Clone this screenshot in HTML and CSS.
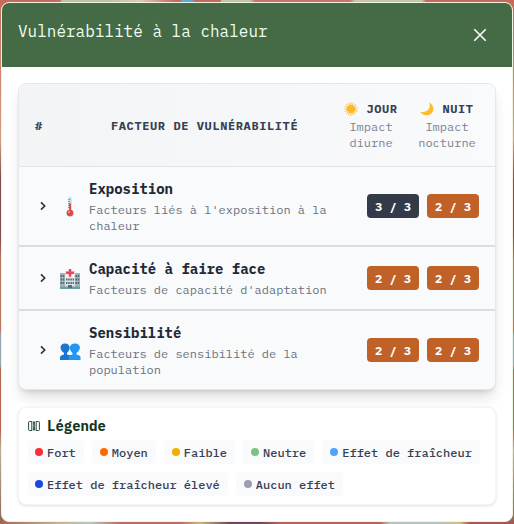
FILE: index.html
```html
<!DOCTYPE html>
<html lang="fr">
<head>
<meta charset="utf-8">
<title>Vulnérabilité à la chaleur</title>
<link rel="stylesheet" href="styles.css">
</head>
<body>
<div class="modal">
  <header class="modal-header">
    <h1>Vulnérabilité à la chaleur</h1>
    <svg class="close" viewBox="0 0 14 14"><path d="M1.3 1.3 12.7 12.7M12.7 1.3 1.3 12.7"/></svg>
  </header>
  <main class="modal-body">
    <section class="table">
      <div class="table-head">
        <div>#</div>
        <div class="factor">Facteur de vulnérabilité</div>
        <div class="period">
          <div class="period-name"><svg class="sky" viewBox="0 0 14 14"><path d="M7 .3V13.700M.3 7H13.700M2.200 2.200 11.800 11.800M11.800 2.200 2.200 11.800M4.400 .8 9.600 13.200M9.600 .8 4.400 13.200M.8 4.400 13.200 9.600M.8 9.600 13.200 4.400" stroke="#fdb52a" stroke-width=".9"/><circle cx="7" cy="7" r="4" fill="#fcb827"/></svg>Jour</div>
          <div class="impact">Impact<br>diurne</div>
        </div>
        <div class="period">
          <div class="period-name"><svg class="sky" viewBox="0 0 14 14"><path fill="#fbbd2c" d="M9.3 .4C16 4 14 12.8 7.300 13.300 4 13.500 1.300 12 .3 9.800 6 11.500 11.500 7 9.300 .4Z"/></svg>Nuit</div>
          <div class="impact">Impact<br>nocturne</div>
        </div>
      </div>
      <div class="row">
        <svg class="chevron" viewBox="0 0 6 10"><path d="M1 1.300 4.700 5 1 8.700"/></svg>
        <svg class="icon" viewBox="0 0 22 22"><path d="M9.200 2.500a1.800 1.800 0 0 1 3.600 0V14a3.800 3.800 0 1 1-3.600 0Z" fill="#c9e2e9"/><path d="M10.200 7.500h1.800v7h-1.800z" fill="#e5483f"/><circle cx="11" cy="17" r="3.300" fill="#e5483f"/><path d="M9.200 3.500h2M9.200 5.500h2M9.200 7.500h2M9.200 9.500h2M9.200 11.500h2" stroke="#546e7a" stroke-width=".7"/><circle cx="10" cy="16" r="1" fill="#ff9c90"/></svg>
        <div class="text"><h2>Exposition</h2><p>Facteurs liés à l'exposition à la chaleur</p></div>
        <span class="badge dark">3 / 3</span><span class="badge">2 / 3</span>
      </div>
      <div class="row">
        <svg class="chevron" viewBox="0 0 6 10"><path d="M1 1.300 4.700 5 1 8.700"/></svg>
        <svg class="icon" viewBox="0 0 22 22"><path fill="#a3b5bb" d="M1 5h20v15H1z"/><path fill="#dde3e6" d="M6 3h10v17H6z"/><path fill="#6f9ea6" d="M1 18.500h20V21H1z"/><path d="M1.500 8h4M1.500 11.500h4M1.500 15h4M16.500 8h4M16.500 11.500h4M16.500 15h4M7 11.500h8M7 15h8" stroke="#4f6b74" stroke-width="2" stroke-dasharray="1.500 .7"/><path fill="#546e7a" d="M9 17h4v3H9z"/><path fill="#f3f5f6" d="M7 2h8v7.500H7z"/><path fill="#f44359" d="M9.700 1h2.600v2.500H15v2.600h-2.700v2.600H9.700V6.100H7V3.500h2.700z"/></svg>
        <div class="text"><h2>Capacité à faire face</h2><p>Facteurs de capacité d'adaptation</p></div>
        <span class="badge">2 / 3</span><span class="badge">2 / 3</span>
      </div>
      <div class="row">
        <svg class="chevron" viewBox="0 0 6 10"><path d="M1 1.300 4.700 5 1 8.700"/></svg>
        <svg class="icon" viewBox="0 0 22 22"><path fill="#1976d2" d="M1 20v-2.500C1 15.500 3 15 5 14.500V13C-.5 9 1 3.500 6 3.500s6.500 5.500 2 9.500v1.500c3 .5 5 1 5 3V20Z"/><path fill="#2196f3" d="M9.500 20v-2.500c0-2 2-2.500 4-3V13c-4.500-4-3-9.500 2.500-9.500s7 5.500 1.500 9.500v1.500c2 .5 4 1 4 3V20Z"/></svg>
        <div class="text"><h2>Sensibilité</h2><p>Facteurs de sensibilité de la population</p></div>
        <span class="badge">2 / 3</span><span class="badge">2 / 3</span>
      </div>
    </section>
    <section class="legend">
      <h3><svg class="legend-icon" viewBox="0 0 12 12"><path d="M1.500 1.500H3.800V10.500H1.500Q.6 10.500 .6 9.600V2.400Q.6 1.500 1.500 1.500ZM5.300 1.500Q7 5 5.300 10.500M6.500 1.500Q5.200 6 6.800 10.500M8.200 1.500H10.500Q11.400 1.500 11.400 2.400V9.600Q11.400 10.500 10.500 10.500H8.200Z"/></svg>Légende</h3>
      <div class="chips">
        <span class="chip"><i class="dot strong"></i>Fort</span>
        <span class="chip"><i class="dot medium"></i>Moyen</span>
        <span class="chip"><i class="dot weak"></i>Faible</span>
        <span class="chip"><i class="dot neutral"></i>Neutre</span>
        <span class="chip"><i class="dot cool"></i>Effet de fraîcheur</span>
        <span class="chip"><i class="dot cooler"></i>Effet de fraîcheur élevé</span>
        <span class="chip"><i class="dot none"></i>Aucun effet</span>
      </div>
    </section>
  </main>
</div>
</body>
</html>
```
FILE: styles.css
```css
* { box-sizing: border-box; margin: 0; padding: 0; }
body {
  width: 514px; height: 524px; padding: 2px 1px 2px 1px; overflow: hidden;
  font-family: "IBM Plex Mono", "Liberation Mono", monospace;
  background:
    linear-gradient(90deg, #c66b5c 0 60px, #b9c39d 62px 105px, #dccdb0 140px, #c66b5c 175px 180px, #62a8d0 182px 192px, #c66b5c 195px 220px, #bfc79f 222px 250px, #c97566 255px 350px, #c5c8a0 355px 422px, #c66b5c 426px) top / 100% 3px no-repeat,
    linear-gradient(90deg, #a76751, #c5b58e 60px, #b9c7c2 90px, #b86f5e 120px 180px, #c7b777 200px, #74455a 230px 260px, #b86555 280px 380px, #b7c3be 390px 440px, #d2c079 460px, #a55a50 470px) bottom / 100% 4px no-repeat,
    linear-gradient(#c66b5c, #d3a080 140px, #824a48 180px 235px, #bd7562 260px 330px, #94a9ae 335px 365px, #b66951 370px 430px, #b9b399 450px, #8e665b);
}
.modal { height: 520px; background: #fff; border: 1px solid #eef3e8; border-radius: 8px; overflow: hidden; }
.modal-header { display: flex; justify-content: space-between; height: 64px; padding: 16px; background: #446b45; color: #f0fdf0; }
.modal-header h1 { font-size: 16px; font-weight: 400; line-height: 24px; }
.close { width: 14px; height: 14px; margin: 9px 9px 0 0; fill: none; stroke: #fff; stroke-width: 1.6; }
.modal-body { padding: 16px; }
.table { height: 307px; border: 1px solid #e5e7eb; border-radius: 8px; overflow: hidden; background: #f9fafb; box-shadow: 0 10px 15px -3px #0002, 0 4px 6px -4px #0003; }
.table-head { display: grid; grid-template-columns: 8px 290px 76px 76px; align-items: center; height: 83px; padding: 1px 0 0 16px; background: linear-gradient(90deg, #f3f4f6, #f9fafb); border-bottom: 1px solid #e1e4e8; color: #364153; font-size: 12px; font-weight: 700; line-height: 16px; }
.table-head > div:first-child { padding-top: 1px; }
.factor { padding: 1px 0 0 68px; letter-spacing: .6px; text-transform: uppercase; white-space: nowrap; }
.period { text-align: center; }
.period-name { display: flex; justify-content: center; gap: 8px; letter-spacing: .6px; text-transform: uppercase; padding-bottom: 2px; }
.sky { width: 14px; height: 14px; margin-top: 1px; }
.impact { color: #7b8290; font-weight: 400; }
.row { display: flex; align-items: center; height: 80px; padding: 0 16px 0 21px; border-bottom: 2px solid #d9dce0; }
.row:nth-child(3) { height: 64px; }
.row:last-child { height: 78px; border-bottom: 0; }
.chevron { width: 6px; height: 10px; fill: none; stroke: #303640; stroke-width: 1.7; }
.icon { width: 22px; height: 22px; margin: 2px 8px 0 13px; flex: none; }
.text { flex: 1; padding-right: 32px; }
.text h2 { padding-top: 1px; color: #1e2939; font-size: 14px; line-height: 20px; height: 21px; margin-bottom: 3px; font-weight: 700; }
.text p { color: #6a7282; font-size: 12px; line-height: 16px; }
.badge { display: grid; place-items: center; width: 52px; height: 24px; margin-left: 8px; border-radius: 4px; background: #c06228; color: #fff; font-size: 12px; font-weight: 700; white-space: pre; }
.text + .badge { margin-left: 0; }
.dark { background: #333b49; }
.legend { height: 98px; margin-top: 17px; padding: 8px 9px; border: 1px solid #f3f4f6; border-radius: 8px; background: #fff; box-shadow: 0 1px 3px #0002; }
.legend h3 { display: flex; align-items: center; gap: 7px; height: 20px; color: #12351f; font-size: 14px; font-weight: 700; }
.legend-icon { width: 12px; height: 12px; fill: none; stroke: currentColor; stroke-width: .9; }
.chips { display: flex; flex-wrap: wrap; gap: 8px; margin-top: 4px; }
.chip { display: flex; align-items: center; height: 24px; padding: 0 8px 0 7px; border-radius: 4px; background: #f9fafb; color: #364153; font-size: 12px; font-weight: 500; white-space: nowrap; }
.chip + .chip { padding-left: 8px; }
.chip:nth-child(6) { padding-left: 7px; }
.dot { width: 8px; height: 8px; border-radius: 50%; margin: -1px 4px 0 0; }
.strong { background: #fb2c36; }
.medium { background: #ff6900; }
.weak { background: #f0b100; }
.neutral { background: #7bc47f; }
.cool { background: #51a2ff; }
.cooler { background: #1447e6; }
.none { background: #99a1af; }
```
